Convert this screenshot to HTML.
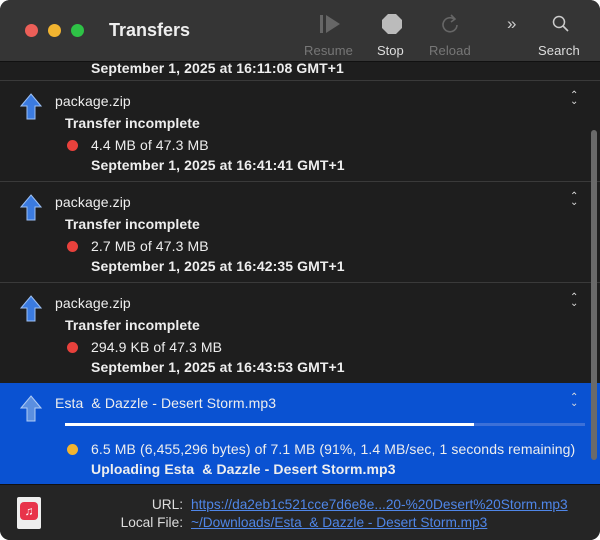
<!DOCTYPE html>
<html><head><style>
*{margin:0;padding:0;box-sizing:border-box}
body{width:600px;height:540px;background:#fff;font-family:"Liberation Sans",sans-serif;overflow:hidden;position:relative}
.win{position:absolute;left:0;top:0;width:600px;height:540px;border-radius:10px;overflow:hidden;background:#1e1e1e}
.title{position:absolute;left:0;top:0;width:600px;height:62px;background:#353535;border-bottom:1px solid #111}
.dot{position:absolute;top:24px;width:13px;height:13px;border-radius:50%}
.t{position:absolute;color:#eee;white-space:nowrap}
.row{position:absolute;left:0;width:600px;height:101px;border-top:1px solid #3a3a3a}
.row div,.f{font-size:14px;letter-spacing:0.1px}
.g{font-size:13.7px;letter-spacing:0}
.name{position:absolute;left:55px;top:12px;color:#eee}
.st{position:absolute;left:65px;top:34px;font-weight:bold;color:#eee}
.red{position:absolute;left:67px;top:59px;width:11px;height:11px;border-radius:50%;background:#e8413c}
.sz{position:absolute;left:91px;top:56px;color:#eee}
.dt{position:absolute;left:91px;top:76px;font-weight:bold;color:#eee}
.arr{position:absolute;left:20px;top:12px}
.row .chev{position:absolute;left:570px;top:12px;color:#ddd;font-size:10px;line-height:6px}
</style></head><body>
<div class="win">
<div class="title">
<div class="dot" style="left:25px;background:#ec5f58"></div>
<div class="dot" style="left:48px;background:#f2b430"></div>
<div class="dot" style="left:71px;background:#2ec246"></div>
<div class="t" style="left:109px;top:20px;font-size:18px;font-weight:bold">Transfers</div>
<svg style="position:absolute;left:320px;top:14px" width="22" height="20"><rect x="0" y="1" width="3" height="18" fill="#666"/><path d="M6 1L20 10L6 19Z" fill="#666"/></svg>
<div class="t" style="left:304px;top:43px;font-size:13px;color:#777;letter-spacing:0.1px">Resume</div>
<svg style="position:absolute;left:382px;top:14px" width="20" height="20"><polygon points="6,0 14,0 20,6 20,14 14,20 6,20 0,14 0,6" fill="#bbb"/></svg>
<div class="t" style="left:377px;top:43px;font-size:13px;color:#ddd">Stop</div>
<svg style="position:absolute;left:440px;top:13px" width="20" height="22"><path d="M14 6A7 7 0 1 0 17 12" stroke="#666" stroke-width="1.6" fill="none"/><path d="M11 2L15 6L11 9" stroke="#666" stroke-width="1.6" fill="none"/></svg>
<div class="t" style="left:429px;top:43px;font-size:13px;color:#777;letter-spacing:0.1px">Reload</div>
<div class="t" style="left:507px;top:14px;font-size:17px;color:#ccc">»</div>
<svg style="position:absolute;left:552px;top:15px" width="18" height="18"><circle cx="7" cy="7" r="5.5" stroke="#ccc" stroke-width="1.5" fill="none"/><path d="M11 11L16 16" stroke="#ccc" stroke-width="1.6"/></svg>
<div class="t" style="left:538px;top:43px;font-size:13px;color:#ddd;letter-spacing:0.1px">Search</div>
</div>
<div class="t f" style="left:91px;top:60px;font-weight:bold">September 1, 2025 at 16:11:08 GMT+1</div>

<div class="row" style="top:80px">
<svg class="arr" width="22" height="28"><path d="M11 1L21 13H15V26H7V13H1Z" fill="#3b7be0" stroke="#9cc0f5" stroke-width="1"/></svg>
<div class="name">package.zip</div><div class="chev">⌃<br>⌄</div>
<div class="st">Transfer incomplete</div><div class="red"></div>
<div class="sz">4.4 MB of 47.3 MB</div><div class="dt">September 1, 2025 at 16:41:41 GMT+1</div></div>

<div class="row" style="top:181px">
<svg class="arr" width="22" height="28"><path d="M11 1L21 13H15V26H7V13H1Z" fill="#3b7be0" stroke="#9cc0f5" stroke-width="1"/></svg>
<div class="name">package.zip</div><div class="chev">⌃<br>⌄</div>
<div class="st">Transfer incomplete</div><div class="red"></div>
<div class="sz">2.7 MB of 47.3 MB</div><div class="dt">September 1, 2025 at 16:42:35 GMT+1</div></div>

<div class="row" style="top:282px">
<svg class="arr" width="22" height="28"><path d="M11 1L21 13H15V26H7V13H1Z" fill="#3b7be0" stroke="#9cc0f5" stroke-width="1"/></svg>
<div class="name">package.zip</div><div class="chev">⌃<br>⌄</div>
<div class="st">Transfer incomplete</div><div class="red"></div>
<div class="sz">294.9 KB of 47.3 MB</div><div class="dt">September 1, 2025 at 16:43:53 GMT+1</div></div>

<div class="row" style="top:383px;height:101px;background:#0a52d2;border-top:none">
<svg class="arr" width="22" height="28"><path d="M11 1L21 13H15V26H7V13H1Z" fill="#5b8fe0" stroke="#b0ccf5" stroke-width="1"/></svg>
<div class="name" style="top:12px">Esta &nbsp;&amp; Dazzle - Desert Storm.mp3</div><div class="chev">⌃<br>⌄</div>
<div style="position:absolute;left:65px;top:40px;width:520px;height:3px;background:#3c70d8"></div>
<div style="position:absolute;left:65px;top:40px;width:409px;height:3px;background:#fff"></div>
<div class="red" style="background:#f2b430;top:61px"></div>
<div class="sz" style="top:58px">6.5 MB (6,455,296 bytes) of 7.1 MB (91%, 1.4 MB/sec, 1 seconds remaining)</div>
<div class="dt" style="top:78px">Uploading Esta &nbsp;&amp; Dazzle - Desert Storm.mp3</div></div>

<div style="position:absolute;left:591px;top:130px;width:6px;height:330px;border-radius:3px;background:#6a6a6a"></div>

<div style="position:absolute;left:0;top:484px;width:600px;height:56px;background:#252525;border-top:1px solid #111">
<div style="position:absolute;left:17px;top:12px;width:24px;height:32px;background:#eee;border-radius:2px"><div style="position:absolute;left:3px;top:5px;width:18px;height:18px;background:#e8334a;border-radius:4px;color:#fff;font-size:12px;text-align:center;line-height:18px">♫</div></div>
<div class="t g" style="right:417px;top:12px;color:#ddd">URL:</div>
<div class="t g" style="left:191px;top:12px;color:#4f86e8;text-decoration:underline">https://da2eb1c521cce7d6e8e...20-%20Desert%20Storm.mp3</div>
<div class="t g" style="right:417px;top:30px;color:#ddd">Local File:</div>
<div class="t g" style="left:191px;top:30px;color:#4f86e8;text-decoration:underline">~/Downloads/Esta &nbsp;&amp; Dazzle - Desert Storm.mp3</div>
</div>
</div>
</body></html>
